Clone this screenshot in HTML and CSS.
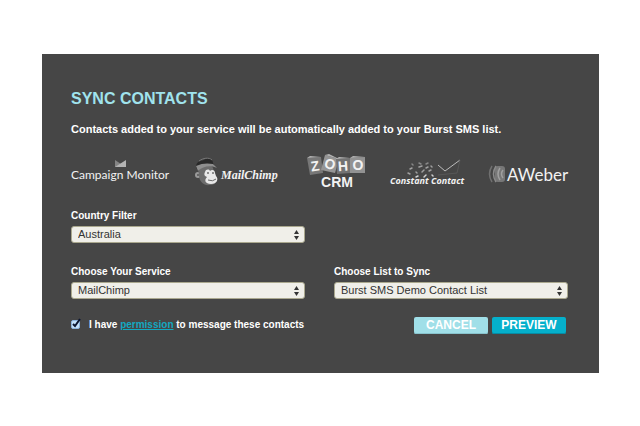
FILE: index.html
```html
<!DOCTYPE html>
<html lang="en">
<head>
  <meta charset="UTF-8">
  <meta name="viewport" content="width=device-width, initial-scale=1.0">
  <title>Sync Contacts</title>
  <link rel="stylesheet" href="styles.css">
</head>
<body>

  <form class="panel">
    <h1>SYNC CONTACTS</h1>
    <p class="intro">Contacts added to your service will be automatically added to your Burst SMS list.</p>

    <!-- Service logos -->
    <div class="logos">
      <svg width="99" height="36" viewBox="0 0 99 36" role="img" aria-label="Campaign Monitor">
        <path d="M44 6 L50 10 L55 13 H44Z" fill="#858585"/>
        <path d="M55 6 V13 H44Z" fill="#b4b4b4"/>
        <text class="logo-campaign" x="0" y="25">Campaign Monitor</text>
      </svg>

      <svg width="87" height="36" viewBox="0 0 87 36" role="img" aria-label="MailChimp">
        <circle cx="3" cy="21" r="3" fill="#9a9a9a"/>
        <circle cx="3" cy="21" r="1" fill="#555"/>
        <path d="M3 15 C4 10 17 9 18 14 L20 22 C23 25 22 31 15 31 C8 32 4 27 4 21Z" fill="#6c6c6c"/>
        <path d="M10 18 C11 15 14 15 15 17 C17 15 20 16 20 19 L21 22 C24 25 22 30 16 30 C10 30 9 26 12 23 C9 22 9 20 10 18Z" fill="#e8e8e8"/>
        <path d="M1 13 C1 8 5 7 9 6 C14 3 18 5 18 9 L20 13 C14 10 7 12 3 17Z" fill="#292929"/>
        <path d="M1 12 C7 9 13 9 18 10 L22 14 C16 11 8 12 3 17Z" fill="#8e8e8e"/>
        <path d="M4 7 C8 4 14 3 17 6" fill="none" stroke="#777"/>
        <path d="M12 19 h2 M17 19 h2" stroke="#333"/>
        <path d="M13 26 Q18 28 21 25" fill="none" stroke="#666"/>
        <text class="logo-chimp" x="26" y="25">MailChimp</text>
      </svg>

      <svg width="58" height="36" viewBox="0 0 58 36" role="img" aria-label="Zoho CRM">
        <path d="M0 4 L14 3 L16 19 L3 21Z" fill="#777"/>
        <path d="M18 1 L32 5 L28 19 L14 16Z" fill="#959595"/>
        <path d="M29 5 L43 4 L44 19 L30 20Z" fill="#727272"/>
        <path d="M43 4 L58 3 L58 19 L43 19Z" fill="#929292"/>
        <path d="M0 4 L3 2 L14 3Z M29 5 L32 3 L43 4Z M43 4 L46 2 L58 3Z M18 1 L22 0 L32 5Z" fill="#b4b4b4"/>
        <g class="logo-zoho">
          <text x="8" y="17" transform="rotate(-8 8 12)">Z</text>
          <text x="23" y="15" transform="rotate(14 23 10)">O</text>
          <text x="36" y="17" transform="rotate(-4 36 12)">H</text>
          <text x="51" y="16">O</text>
        </g>
        <text class="logo-crm" x="30" y="33">CRM</text>
      </svg>

      <svg width="73" height="36" viewBox="0 0 73 36" role="img" aria-label="Constant Contact">
        <g fill="none" stroke="#a0a0a0" stroke-width="1.5" stroke-linecap="round">
          <path d="M22 10 l1 1 M29 9 l2 1 M36 10 l2 -1" stroke="#878787"/>
          <path d="M20 15 l2 -1 M29 13 l3 -1 M36 14 l2 -1 M41 12 l1 1"/>
          <path d="M18 19 l2 1 M26 18 l1 1 M32 18 l2 -2 M39 17 l2 -1"/>
          <path d="M26 23 l2 -1 M34 23 l2 -2 M42 21 l1 1" stroke="#d0d0d0"/>
        </g>
        <path d="M48 11 L55 17 L70 6" fill="none" stroke="#bcbcbc"/>
        <path d="M70 6 L67 19 L48 21" fill="none" stroke="#575757"/>
        <text class="logo-constant" x="0" y="30">Constant Contact</text>
      </svg>

      <svg width="80" height="36" viewBox="0 0 80 36" role="img" aria-label="AWeber">
        <rect x="7" y="12" width="10" height="16" rx="3" fill="#777"/>
        <g fill="none" stroke-width="1.5">
          <path d="M4 12 Q-1 20 4 28" stroke="#707070"/>
          <path d="M8 12 Q3 20 8 28" stroke="#8a8a8a"/>
          <path d="M12 14 Q8 20 12 26 M15 16 Q12 20 15 24" stroke="#a0a0a0"/>
        </g>
        <text class="logo-aweber" x="19" y="27">AWeber</text>
      </svg>
    </div>

    <div class="fields">
      <div class="field">
        <label for="country">Country Filter</label>
        <div class="select-box">
          <select id="country"><option>Australia</option></select>
          <svg class="arrows" width="5" height="10" viewBox="0 0 5 10"><path d="M0 4 L2.5 0 L5 4Z M0 6 H5 L2.5 10Z"/></svg>
        </div>
      </div>
      <div class="field service">
        <label for="service">Choose Your Service</label>
        <div class="select-box">
          <select id="service"><option>MailChimp</option></select>
          <svg class="arrows" width="5" height="10" viewBox="0 0 5 10"><path d="M0 4 L2.5 0 L5 4Z M0 6 H5 L2.5 10Z"/></svg>
        </div>
      </div>
      <div class="field">
        <label for="list">Choose List to Sync</label>
        <div class="select-box">
          <select id="list"><option>Burst SMS Demo Contact List</option></select>
          <svg class="arrows" width="5" height="10" viewBox="0 0 5 10"><path d="M0 4 L2.5 0 L5 4Z M0 6 H5 L2.5 10Z"/></svg>
        </div>
      </div>
    </div>

    <div class="footer">
      <div class="permission">
        <span class="tick">
          <input type="checkbox" id="permission" checked>
          <svg width="10" height="11" viewBox="0 0 10 11"><path d="M2 6 L4 8 L9 1" fill="none" stroke="#0b1530" stroke-width="2"/></svg>
        </span>
        <label for="permission">I have <a href="#">permission</a> to message these contacts</label>
      </div>
      <div class="buttons">
        <button type="button" class="cancel">CANCEL</button>
        <button type="submit" class="preview">PREVIEW</button>
      </div>
    </div>
  </form>

</body>
</html>
```

FILE: styles.css
```css
* {
  box-sizing: border-box;
}

body {
  margin: 0;
  padding: 54px 41px 53px 42px;
  background: #fff;
  color: #fff;
  font-family: "Liberation Sans", Arial, sans-serif;
}

.panel {
  padding: 34px 31px 39px 29px;
  background: #464646;
}

h1 {
  margin: 0;
  color: #a0e3ed;
  font-size: 16px;
  line-height: 22px;
}

.intro {
  margin: 12px 0 0;
  font-size: 11px;
  font-weight: bold;
  line-height: 14px;
}

.logos {
  display: flex;
  justify-content: space-between;
  margin-top: 18px;
}

.logos svg {
  overflow: visible;
}

.logos text {
  fill: #f2f2f2;
}

.logos .logo-campaign {
  font: 12px Lato, sans-serif;
}

.logos .logo-chimp {
  font: italic bold 12px "Liberation Serif", serif;
}

.logos .logo-zoho text {
  font: bold 14px "Liberation Sans", sans-serif;
  text-anchor: middle;
}

.logos .logo-crm {
  font: bold 14px "Liberation Sans", sans-serif;
  text-anchor: middle;
}

.logos .logo-constant {
  font: italic bold 9px "Open Sans", sans-serif;
}

.logos .logo-aweber {
  font: 17px Lato, sans-serif;
}

.fields {
  display: grid;
  grid-template-columns: 1fr 1fr;
  gap: 22px 29px;
  margin-top: 19px;
}

.service {
  grid-column-start: 1;
}

.field label {
  display: block;
  margin-bottom: 4px;
  font-size: 10px;
  font-weight: bold;
  line-height: 13px;
}

.select-box {
  position: relative;
}

select {
  display: block;
  width: 100%;
  height: 17px;
  padding: 0 20px 0 6px;
  appearance: none;
  background: #f0efe9;
  border: 1px solid #aaa88e;
  border-radius: 3px;
  color: #333;
  font: 11px/15px "Liberation Sans", Arial, sans-serif;
}

.arrows {
  position: absolute;
  top: 4px;
  right: 6px;
  fill: #333;
  pointer-events: none;
}

.footer {
  display: flex;
  justify-content: space-between;
  margin-top: 18px;
}

.permission {
  display: flex;
  gap: 8px;
  font-size: 10px;
  font-weight: bold;
  line-height: 16px;
}

.tick {
  position: relative;
  width: 10px;
}

.tick input {
  display: block;
  width: 9px;
  height: 9px;
  margin: 3px 0 0;
  appearance: none;
  background: #c3e1fa;
  border: 1px solid #8db4dd;
  border-radius: 2px;
}

.tick svg {
  position: absolute;
  top: 1px;
  left: 0;
  visibility: hidden;
  pointer-events: none;
}

.tick input:checked + svg {
  visibility: visible;
}

.permission a {
  color: #12a9c2;
}

.buttons {
  display: flex;
  gap: 4px;
  padding-right: 2px;
}

button {
  width: 74px;
  height: 17px;
  padding: 0;
  border: 0;
  border-radius: 2px;
  color: #fff;
  font: bold 12px/17px "Liberation Sans", Arial, sans-serif;
  cursor: pointer;
}

.cancel {
  background: #a0dfe8;
  box-shadow: inset 0 -1px #88c3cd;
}

.preview {
  background: #05b0cb;
  box-shadow: inset 0 -1px #078ca4;
}
```
